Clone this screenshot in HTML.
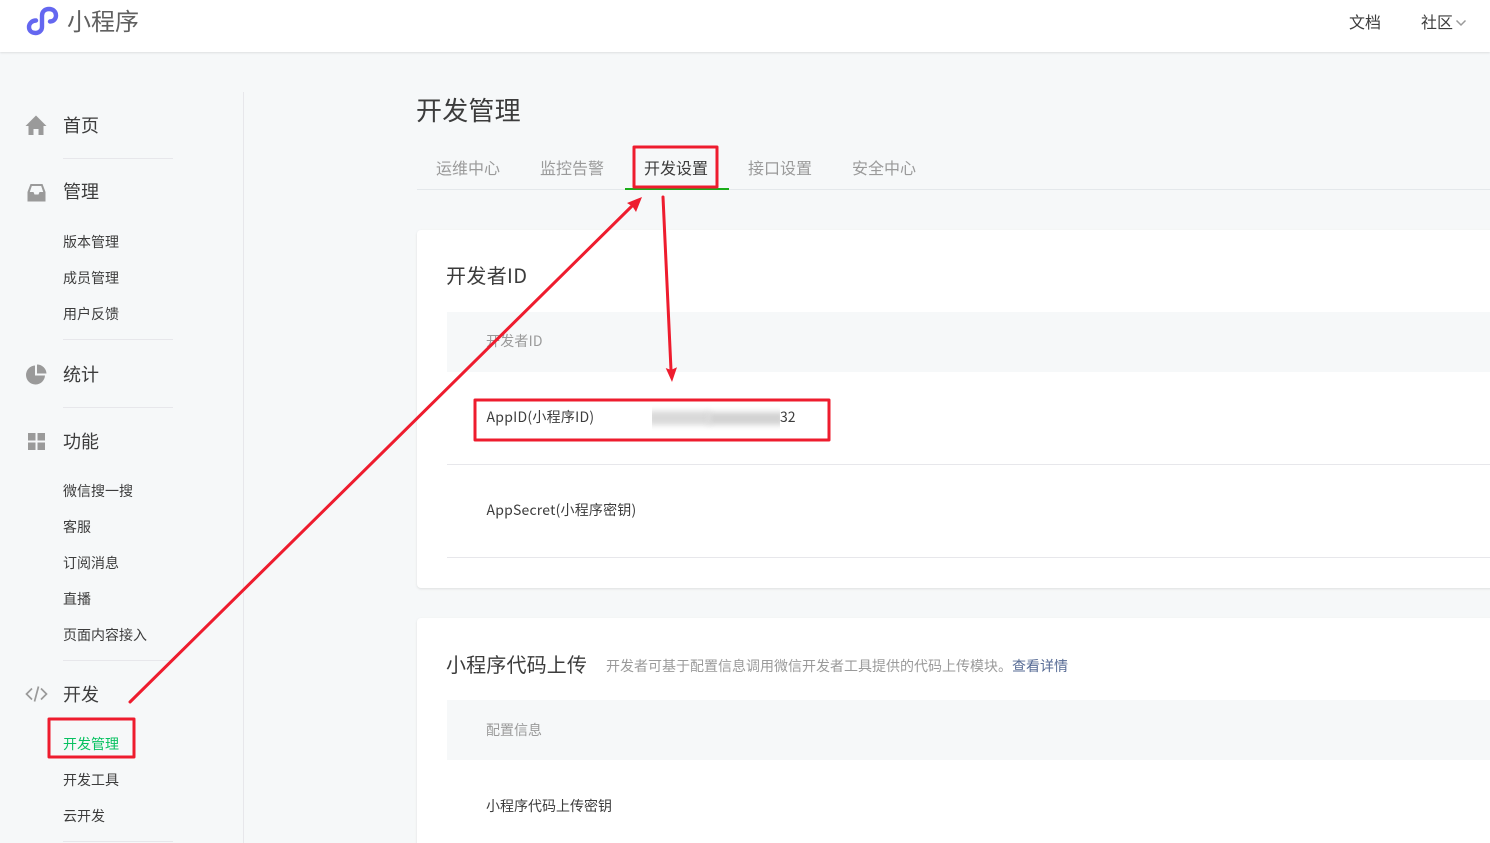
<!DOCTYPE html>
<html lang="zh"><head><meta charset="utf-8">
<style>
html,body{margin:0;padding:0;width:1490px;height:843px;overflow:hidden;background:#f6f8f9}
#w{position:absolute;left:0;top:0;width:1490px;height:843px;overflow:hidden;background:#f6f8f9;font-family:"Noto Sans CJK SC","Liberation Sans",sans-serif;color:#3c3c3c}
.t{position:absolute;white-space:nowrap;line-height:1}
.hd{position:absolute;left:0;top:0;width:1490px;height:52px;background:#fff;box-shadow:0 1px 2px rgba(0,0,0,.1)}
.ln{position:absolute;background:#e7e7eb;height:1px}
.m{font-size:18px;left:63px}
.s{font-size:14px;left:63px}
.card{position:absolute;background:#fff;border-radius:4px;box-shadow:0 1px 2px rgba(150,150,150,.25)}
.tab{font-size:16px;top:159px;color:#9a9a9a}
</style></head><body>
<div id="w">
<div class="hd"></div>
<svg style="position:absolute;left:0;top:0" width="70" height="40" viewBox="0 0 70 40" fill="none"><path d="M36 20.500 C32 20.500 29 23.500 29 27 C29 31 32 33 35.500 33 C39 33 42 30.500 42 27 L42 15.500 C42 11.500 45 9 49 9 C53 9 56 11.500 56 15.500 C56 19 53.500 21.500 50 21.500" stroke="#6467f0" stroke-width="4.400" stroke-linecap="round"/></svg>
<div class="t" style="left:67px;top:8px;font-size:24px;color:#606060">小程序</div>
<div class="t" style="left:1349px;top:13px;font-size:16px">文档</div>
<div class="t" style="left:1421px;top:13px;font-size:16px">社区</div>
<svg style="position:absolute;left:1455px;top:19px" width="12" height="8" viewBox="0 0 12 8" fill="none"><path d="M1.500 1.500 L6 6 L10.500 1.500" stroke="#9a9a9a" stroke-width="1.500"/></svg>

<div style="position:absolute;left:243px;top:92px;width:1px;height:751px;background:#e7e7eb"></div>

<svg style="position:absolute;left:25px;top:115px" width="22" height="21" viewBox="0 0 22 21"><path d="M11 .5 L21.500 11 L18.500 11 L18.500 20 L13.500 20 L13.500 14 L8.500 14 L8.500 20 L3.500 20 L3.500 11 L.5 11 Z" fill="#9a9a9a"/></svg>
<div class="t m" style="top:116px">首页</div>
<div class="ln" style="left:63px;top:158px;width:110px"></div>
<svg style="position:absolute;left:27px;top:184px" width="19" height="18" viewBox="0 0 19 18"><path fill-rule="evenodd" d="M3.500 0 H15.500 L18.500 8 V17.500 H.5 V8 Z M4.800 2 L2.800 8 H6.500 L7.500 10.500 H11.500 L12.500 8 H16.200 L14.200 2 Z" fill="#9a9a9a"/></svg>
<div class="t m" style="top:182px">管理</div>
<div class="t s" style="top:235px">版本管理</div>
<div class="t s" style="top:271px">成员管理</div>
<div class="t s" style="top:307px">用户反馈</div>
<div class="ln" style="left:63px;top:339px;width:110px"></div>
<svg style="position:absolute;left:26px;top:364px" width="21" height="21" viewBox="0 0 21 21"><path d="M9 1.500 V11.500 H19 A9.500 9.500 0 1 1 9 1.500 Z" fill="#9a9a9a"/><path d="M11 .5 A9.500 9.500 0 0 1 20.500 9.500 H11 Z" fill="#9a9a9a"/></svg>
<div class="t m" style="top:365px">统计</div>
<div class="ln" style="left:63px;top:407px;width:110px"></div>
<svg style="position:absolute;left:28px;top:433px" width="17" height="17" viewBox="0 0 17 17" fill="#9a9a9a"><rect width="7.500" height="7.500"/><rect x="9.500" width="7.500" height="7.500"/><rect y="9.500" width="7.500" height="7.500"/><rect x="9.500" y="9.500" width="7.500" height="7.500"/></svg>
<div class="t m" style="top:432px">功能</div>
<div class="t s" style="top:484px">微信搜一搜</div>
<div class="t s" style="top:520px">客服</div>
<div class="t s" style="top:556px">订阅消息</div>
<div class="t s" style="top:592px">直播</div>
<div class="t s" style="top:628px">页面内容接入</div>
<div class="ln" style="left:63px;top:660px;width:110px"></div>
<svg style="position:absolute;left:25px;top:685px" width="23" height="18" viewBox="0 0 23 18" fill="none" stroke="#9a9a9a" stroke-width="1.700"><path d="M7 3.500 L1.500 9 L7 14.500"/><path d="M16 3.500 L21.500 9 L16 14.500"/><path d="M13.500 1.500 L9.500 16.500"/></svg>
<div class="t m" style="top:685px">开发</div>
<div class="t s" style="top:737px;color:#07c160">开发管理</div>
<div class="t s" style="top:773px">开发工具</div>
<div class="t s" style="top:809px">云开发</div>
<div class="ln" style="left:63px;top:841px;width:110px"></div>

<div class="t" style="left:416px;top:97px;font-size:26px;letter-spacing:.2px">开发管理</div>
<div style="position:absolute;left:417px;top:189px;width:1073px;height:1px;background:#e4e8eb"></div>
<div class="t tab" style="left:436px">运维中心</div>
<div class="t tab" style="left:540px">监控告警</div>
<div class="t tab" style="left:644px;color:#3c3c3c">开发设置</div>
<div class="t tab" style="left:748px">接口设置</div>
<div class="t tab" style="left:852px">安全中心</div>
<div style="position:absolute;left:625px;top:188px;width:104px;height:2px;background:#1aad19"></div>

<div class="card" style="left:417px;top:230px;width:1090px;height:358px"></div>
<div class="t" style="left:446px;top:265px;font-size:20px;letter-spacing:.35px">开发者ID</div>
<div style="position:absolute;left:447px;top:312px;width:1043px;height:60px;background:#f6f8f9"></div>
<div class="t" style="left:486px;top:334px;font-size:14px;color:#9a9a9a;letter-spacing:.2px">开发者ID</div>
<div class="t" style="left:486.500px;top:410px;font-size:14px;letter-spacing:.25px">AppID(小程序ID)</div>
<div style="position:absolute;left:652px;top:405px;width:128px;height:26px;overflow:hidden"><div style="position:absolute;left:-4px;top:6px;width:62px;height:14px;background:#d9d9d9;filter:blur(3px)"></div><div style="position:absolute;left:56px;top:7px;width:76px;height:13px;background:#d2d2d2;filter:blur(3px)"></div></div>
<div class="t" style="left:780px;top:410px;font-size:14px">32</div>
<div style="position:absolute;left:447px;top:464px;width:1043px;height:1px;background:#e7e7eb"></div>
<div class="t" style="left:486.500px;top:503px;font-size:14px;letter-spacing:.2px">AppSecret(小程序密钥)</div>
<div style="position:absolute;left:447px;top:557px;width:1043px;height:1px;background:#e7e7eb"></div>

<div class="card" style="left:417px;top:618px;width:1090px;height:240px"></div>
<div class="t" style="left:446px;top:654px;font-size:20px;letter-spacing:.15px">小程序代码上传</div>
<div class="t" style="left:606px;top:659px;font-size:14px;color:#9a9a9a">开发者可基于配置信息调用微信开发者工具提供的代码上传模块。<span style="color:#576b95">查看详情</span></div>
<div style="position:absolute;left:447px;top:700px;width:1043px;height:60px;background:#f6f8f9"></div>
<div class="t" style="left:486px;top:723px;font-size:14px;color:#9a9a9a">配置信息</div>
<div class="t" style="left:486px;top:799px;font-size:14px">小程序代码上传密钥</div>

<svg style="position:absolute;left:0;top:0" width="1490" height="843" viewBox="0 0 1490 843" fill="none">
<g stroke="#ee1c2e" stroke-width="3" stroke-linejoin="round">
<rect x="49" y="719" width="85" height="38"/>
<rect x="634" y="147" width="83" height="40"/>
<rect x="475" y="400" width="354" height="40"/>
<path d="M130 702 L632 206" stroke-linecap="round"/>
<path d="M663 197 L671 370" stroke-linecap="round"/>
</g>
<path d="M642 197 L636 212 L632.500 206.500 L627 203 Z" fill="#ee1c2e"/>
<path d="M672 382 L665.700 368 L671 370 L677 367.300 Z" fill="#ee1c2e"/>
</svg>
</div>
</body></html>
